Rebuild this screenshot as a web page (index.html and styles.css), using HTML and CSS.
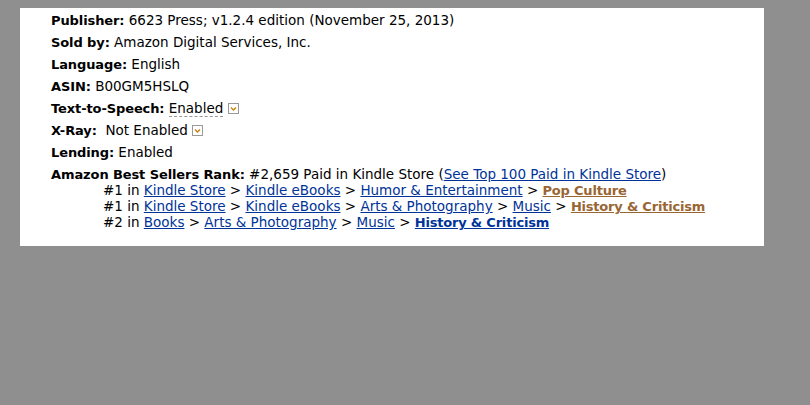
FILE: index.html
```html
<!DOCTYPE html>
<html>
<head>
<meta charset="utf-8">
<link rel="stylesheet" href="styles.css">
</head>
<body>
<div class="box">
  <ul class="details">
    <li><b>Publisher:</b> 6623 Press; v1.2.4 edition (November 25, 2013)</li>
    <li><b>Sold by:</b> Amazon Digital Services, Inc.</li>
    <li><b>Language:</b> English</li>
    <li><b>ASIN:</b> B00GM5HSLQ</li>
    <li><b>Text-to-Speech:</b> <span class="dotted">Enabled</span> <span class="pop"><svg width="11" height="11" viewBox="0 0 11 11"><rect x="0.5" y="0.5" width="10" height="10" fill="#fff" stroke="#999"/><path d="M3 4.5 L5.5 7 L8 4.5" fill="none" stroke="#c8820a" stroke-width="1.4"/></svg></span></li>
    <li><b>X-Ray:</b>&nbsp; Not Enabled <span class="pop"><svg width="11" height="11" viewBox="0 0 11 11"><rect x="0.5" y="0.5" width="10" height="10" fill="#fff" stroke="#999"/><path d="M3 4.5 L5.5 7 L8 4.5" fill="none" stroke="#c8820a" stroke-width="1.4"/></svg></span></li>
    <li><b>Lending:</b> Enabled</li>
    <li class="rank"><b>Amazon Best Sellers Rank:</b> #2,659 Paid in Kindle Store (<a href="#">See Top 100 Paid in Kindle Store</a>)
      <ul class="ladder">
        <li>#1 in <a href="#">Kindle Store</a> &gt; <a href="#">Kindle eBooks</a> &gt; <a href="#">Humor &amp; Entertainment</a> &gt; <a href="#" class="hot">Pop Culture</a></li>
        <li>#1 in <a href="#">Kindle Store</a> &gt; <a href="#">Kindle eBooks</a> &gt; <a href="#">Arts &amp; Photography</a> &gt; <a href="#">Music</a> &gt; <a href="#" class="hot">History &amp; Criticism</a></li>
        <li>#2 in <a href="#">Books</a> &gt; <a href="#">Arts &amp; Photography</a> &gt; <a href="#">Music</a> &gt; <a href="#" class="strong">History &amp; Criticism</a></li>
      </ul>
    </li>
  </ul>
</div>
</body>
</html>
```

FILE: styles.css
```css
html, body {
  margin: 0;
  background: #8f8f8f;
}
body {
  padding: 8px 20px 0 20px;
  font-family: "DejaVu Sans", Verdana, sans-serif;
  font-size: 13.5px;
  color: #000;
}
b {
  font-size: 13px;
  letter-spacing: -0.1px;
  line-height: 1;
}
.box {
  background: #fff;
  width: 744px;
  height: 238px;
  box-sizing: border-box;
  padding: 1px 0 0 31px;
}
.details {
  list-style: none;
  margin: 0;
  padding: 0;
}
.details > li {
  line-height: 22px;
}
.details > li.rank {
  line-height: 16px;
  margin-top: 3px;
}
.dotted {
  border-bottom: 1px dashed #999;
}
.pop svg {
  vertical-align: -1px;
}
.ladder {
  list-style: none;
  margin: 0;
  padding: 0 0 0 52px;
}
.ladder li {
  line-height: 16px;
}
a {
  color: #003399;
}
a.hot,
a.strong {
  font-weight: bold;
  font-size: 13px;
  letter-spacing: -0.2px;
  line-height: 1;
}
a.hot {
  color: #996633;
}
```
